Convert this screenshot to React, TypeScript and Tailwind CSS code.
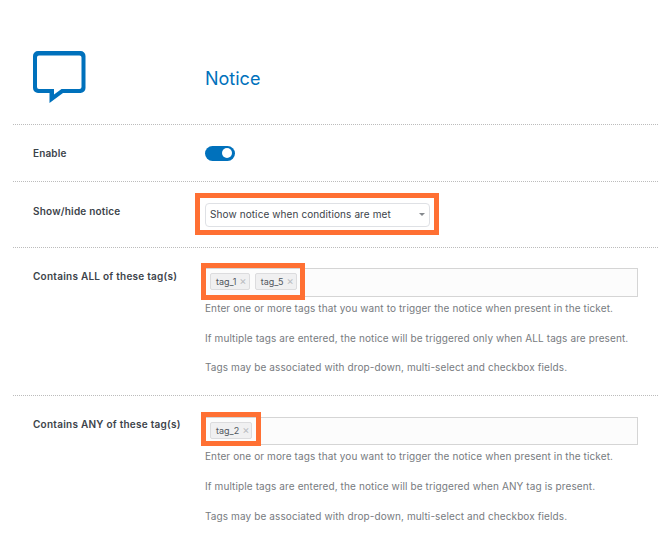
const help = (any: string) => [
  "Enter one or more tags that you want to trigger the notice when present in the ticket.",
  any,
  "Tags may be associated with drop-down, multi-select and checkbox fields.",
];

function Tag({ name }: { name: string }) {
  return (
    <span className="flex h-[17px] items-center gap-[3px] rounded-[2px] border border-[#dcdcde] bg-[#f0f0f1] pl-[5px] pr-[2px] text-[9px] leading-none text-[#50575e]">
      {name}
      <span className="text-[11px] leading-none text-[#b9bcc0]">×</span>
    </span>
  );
}

function TagRow({ label, tags, frame, texts, box, gap, top, border }: { label: string; tags: string[]; frame: string; texts: string[]; box: string; gap: string; top: string; border: string }) {
  return (
    <section className={`flex h-[148px] border-dotted border-[#bcbcbc] ${border}`}>
      <div className="w-[192px] shrink-0 pl-5 pt-[21px] text-[10px] font-semibold leading-[14px] tracking-[0.25px] text-[#3c434a]">{label}</div>
      <div className={`mr-[20px] min-w-0 flex-1 ${top}`}>
        <div className={`relative flex items-center gap-[5px] border border-[#d5d5d5] bg-[#fcfcfc] pb-[2px] pl-[4px] ${box}`}>
          {tags.map((t) => <Tag key={t} name={t} />)}
          <div className={`absolute border-[5px] border-[#ff7033] ${frame}`} />
        </div>
        <div className={`mt-[4px] flex flex-col text-[10px] leading-[15px] tracking-[0.11px] text-[#777b80] ${gap}`}>
          {texts.map((t) => <p key={t}>{t}</p>)}
        </div>
      </div>
    </section>
  );
}

export default function App() {
  return (
    <main className="h-[543px] w-[672px] overflow-hidden bg-white pl-[13px] pr-[14px] font-['Inter','Liberation_Sans',sans-serif]">
      <header className="flex h-[125px] items-start border-b border-dotted border-[#bcbcbc]">
        <div className="w-[192px] shrink-0 pl-5 pt-[51px]">
          <svg width="53" height="53" viewBox="0 0 53 53" fill="#0071bc" fillRule="evenodd">
            <path d="M5 0H47.5a5 5 0 0 1 5 5V37a5 5 0 0 1-5 5H30L16.5 52V42H5a5 5 0 0 1-5-5V5a5 5 0 0 1 5-5ZM6 4.5a2 2 0 0 0-2 2V36a2 2 0 0 0 2 2H21V43.5L28.5 38H46.5a2 2 0 0 0 2-2V6.5a2 2 0 0 0-2-2Z" />
          </svg>
        </div>
        <h1 className="pt-[68px] text-[18px] font-normal leading-[22px] text-[#0071bc]">Notice</h1>
      </header>
      <section className="flex h-[57px] items-center border-b border-dotted border-[#bcbcbc]">
        <div className="w-[192px] shrink-0 pl-5 text-[10px] font-semibold tracking-[0.15px] text-[#3c434a]">Enable</div>
        <div className="flex h-[15px] w-[30px] items-center justify-end rounded-full bg-[#0071bc] pr-[3px]">
          <span className="size-[10px] rounded-full bg-white" />
        </div>
      </section>
      <section className="flex h-[66px] items-center border-b border-dotted border-[#bcbcbc]">
        <div className="mb-[7px] w-[192px] shrink-0 pl-5 text-[10px] font-semibold tracking-[0.2px] text-[#3c434a]">Show/hide notice</div>
        <div className="relative flex h-[24px] w-[225px] items-center justify-between rounded-[4px] border border-[#dfe1e5] bg-white pl-1 pr-[4px] text-[10px] tracking-[0.1px] text-[#3c434a]">
          Show notice when conditions are met
          <span className="border-x-[3px] border-t-[3px] border-x-transparent border-t-[#85898e]" />
          <div className="absolute -bottom-[9px] -left-[11px] -right-[10px] -top-[11px] border-[5px] border-[#ff7033]" />
        </div>
      </section>
      <TagRow
        label="Contains ALL of these tag(s)"
        tags={["tag_1", "tag_5"]}
        frame="-left-[5px] -top-[6px] h-[37px] w-[104px]"
        texts={help("If multiple tags are entered, the notice will be triggered only when ALL tags are present.")}
        box="h-[29px]"
        gap="gap-[14.5px]"
        top="pt-[20px]"
        border="border-b"
      />
      <TagRow
        label="Contains ANY of these tag(s)"
        tags={["tag_2"]}
        frame="-left-[5px] -top-[6px] h-[34px] w-[60px]"
        texts={help("If multiple tags are entered, the notice will be triggered when ANY tag is present.")}
        box="h-[28px]"
        gap="gap-[15px]"
        top="pt-[21px]"
        border=""
      />
    </main>
  );
}
